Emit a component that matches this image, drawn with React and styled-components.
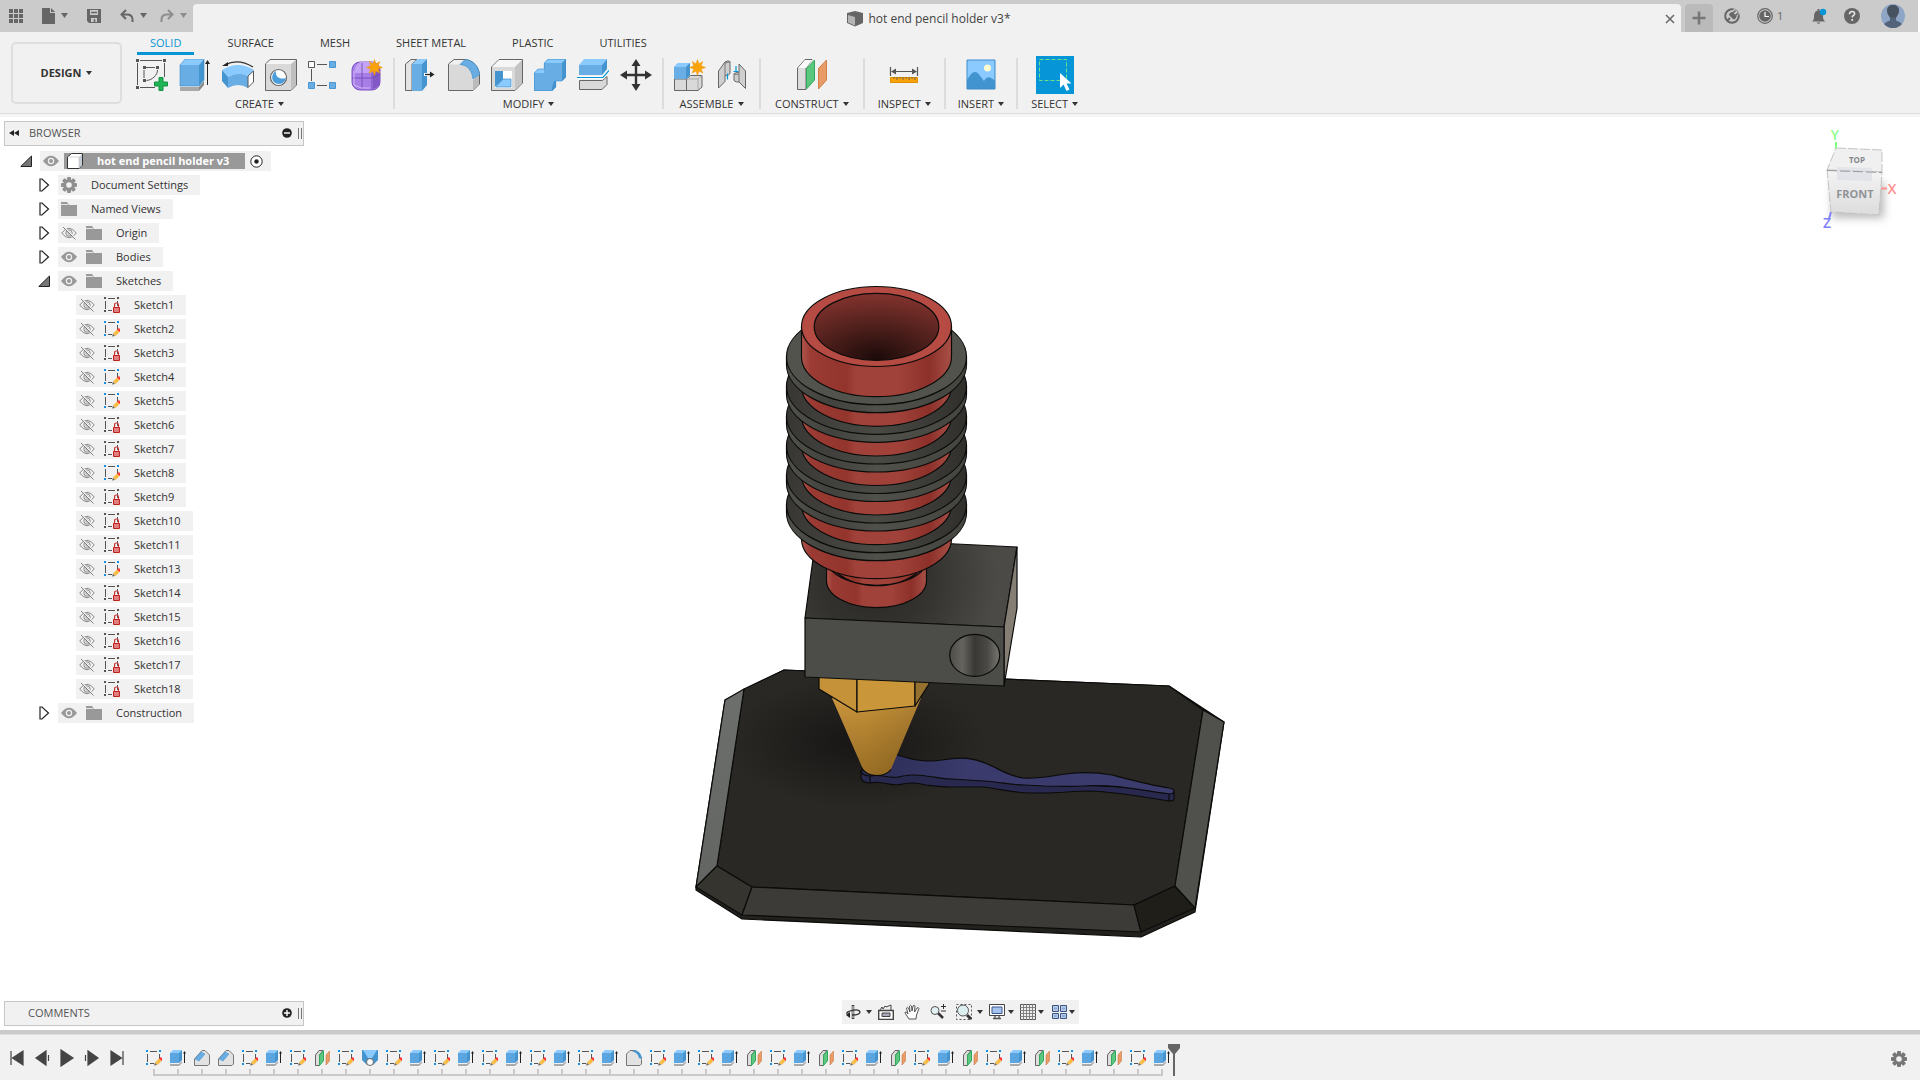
import React, { useState } from "react";
import styled, { createGlobalStyle } from "styled-components";

const GlobalStyle = createGlobalStyle`
  * {
    box-sizing: border-box;
  }

  body {
    margin: 0;
    background: #fff;
    color: #333;
    font-family: "Open Sans", "Noto Sans", sans-serif;
    font-size: 11px;
    line-height: 16px;
  }

  button {
    display: inline-flex;
    align-items: center;
    justify-content: center;
    flex-shrink: 0;
    padding: 0;
    border: 0;
    background: none;
    color: inherit;
    font: inherit;
    white-space: nowrap;
    cursor: pointer;
  }

  ul,
  ol {
    margin: 0;
    padding: 0;
    list-style: none;
  }

  svg {
    display: block;
    flex-shrink: 0;
  }
`;

const Page = styled.div`
  display: flex;
  flex-direction: column;
  height: 100vh;
  overflow: hidden;
`;

/* ---------- top bar ---------- */

const TopBar = styled.header`
  display: flex;
  align-items: flex-end;
  height: 32px;
  margin-right: 2px;
  background: #cbcbcb;
  color: #666;
`;

const QuickTools = styled.div`
  display: flex;
  align-items: center;
  width: 193px;
  height: 32px;
  padding-left: 9px;
`;

const QuickButton = styled.button`
  gap: 6px;
  margin-right: ${(p) => p.$space}px;
  opacity: ${(p) => (p.disabled ? 0.6 : 1)};
`;

const DocumentTab = styled.div`
  display: flex;
  flex: 1;
  align-items: center;
  height: 28px;
  padding: 1px 6px 0 0;
  border-radius: 4px 4px 0 0;
  background: #f1f1f1;
`;

const DocumentTitle = styled.h1`
  display: flex;
  flex: 1;
  align-items: center;
  justify-content: center;
  gap: 5px;
  margin: 0;
  color: #444;
  font-size: 12px;
  font-weight: 400;
`;

const NewTabButton = styled.button`
  width: 28px;
  height: 28px;
  margin-left: 4px;
  border-radius: 4px 4px 0 0;
  background: #bababa;
`;

const Account = styled.div`
  display: flex;
  align-items: center;
  width: 205px;
  height: 32px;
  padding-left: 11px;
`;

const AccountButton = styled.button`
  gap: 4px;
  margin-right: ${(p) => p.$space || 0}px;
`;

/* ---------- ribbon ---------- */

const Ribbon = styled.div`
  display: flex;
  height: 82px;
  border-bottom: 1px solid #dcdcdc;
  background: #f1f1f1;
`;

const RibbonShadow = styled.div`
  height: 3px;
  background: #f5f5f5;
`;

const DesignButton = styled.button`
  gap: 5px;
  width: 111px;
  height: 62px;
  margin: 10px 4px 0 11px;
  border: 2px solid #dedede;
  border-radius: 5px;
  font-weight: 700;
`;

const RibbonTabs = styled.div`
  display: flex;
  gap: 20px;
  height: 23px;
  padding-left: 11px;
`;

const RibbonTab = styled.button`
  padding: 2px 13px 0;
  border-bottom: 3px solid ${(p) => (p.$active ? "#0696d7" : "transparent")};
  color: ${(p) => (p.$active ? "#0696d7" : "#333")};
`;

const ToolGroups = styled.div`
  display: flex;
  padding-top: 1px;
`;

const ToolGroup = styled.div`
  display: flex;
  flex-direction: column;
  align-items: center;
  gap: 2px;
  height: 56px;
  padding: 0 ${(p) => p.$pad}px;
`;

const Separator = styled.div`
  width: 2px;
  height: 51px;
  margin-top: 2px;
  background: #dcdcdc;
`;

const ToolRow = styled.div`
  display: flex;
  align-items: center;
  gap: 11px;
  height: 38px;
`;

const ToolButton = styled.button`
  width: ${(p) => (p.$active ? 38 : 32)}px;
  height: ${(p) => (p.$active ? 38 : 32)}px;
  background: ${(p) => (p.$active ? "#0696d7" : "none")};
`;

const GroupLabel = styled.button`
  gap: 4px;
  height: 16px;
`;

/* ---------- workspace ---------- */

const Workspace = styled.main`
  position: relative;
  display: flex;
  flex: 1;
  flex-direction: column;
  justify-content: space-between;
  min-height: 0;
`;

const ModelCanvas = styled.svg`
  position: absolute;
  inset: 0;
  width: 100%;
  height: 100%;
`;

const CubeCanvas = styled.svg`
  position: absolute;
  top: 8px;
  right: 15px;
`;

const SidePanel = styled.aside`
  position: relative;
  width: 300px;
  margin: 4px 0 4px 4px;
`;

const PanelHeader = styled.div`
  display: flex;
  align-items: center;
  height: 25px;
  padding: 0 1px 1px 4px;
  border: 1px solid #c6c6c6;
  background: #f1f1f1;
  color: #555;
`;

const PanelTitle = styled.h2`
  flex: 1;
  margin: 0 0 0 ${(p) => (p.$indent ? 19 : 9)}px;
  font-size: 11px;
  font-weight: 400;
`;

const PanelGrip = styled.div`
  width: 4px;
  height: 11px;
  margin-left: 6px;
  border: 1px solid #777;
  border-width: 0 1px;
`;

const Tree = styled.ul`
  display: flex;
  flex-direction: column;
  gap: 4px;
  padding-top: 5px;
`;

const TreeRow = styled.li`
  display: flex;
  align-items: center;
  height: 20px;
  padding-left: ${(p) => p.$indent}px;
`;

const Twisty = styled.button`
  width: 14px;
  margin-right: 7px;
`;

const TreeItem = styled.div`
  display: flex;
  align-items: center;
  gap: ${(p) => (p.$root ? 5 : 9)}px;
  height: 20px;
  padding: 0 ${(p) => (p.$root ? 8 : 12)}px 0 3px;
  background: #f1f1f1;
  white-space: nowrap;
`;

const TreeName = styled.span`
  display: flex;
  align-items: center;
  gap: 14px;
`;

const RootName = styled.strong`
  display: flex;
  align-items: center;
  gap: 14px;
  height: 16px;
  padding: 0 16px 0 3px;
  background: #999;
  color: #fff;
`;

const BottomRow = styled.div`
  position: relative;
  display: grid;
  grid-template-columns: 304px 1fr 304px;
  align-items: end;
`;

const NavBar = styled.nav`
  display: flex;
  align-items: center;
  justify-self: center;
  height: 24px;
  margin-bottom: 6px;
  padding: 0 4px 0 3px;
  background: #f1f1f1;
`;

const NavButton = styled.button`
  gap: ${(p) => p.$gap || 0}px;
  margin-left: ${(p) => p.$space || 0}px;
`;

/* ---------- timeline ---------- */

const Timeline = styled.footer`
  display: flex;
  align-items: flex-start;
  height: 50px;
  border-top: 4px solid #cacaca;
  padding-left: 4px;
  background: #f1f1f1;
  box-shadow: inset 0 1px #dedede;
`;

const PlayControls = styled.div`
  display: flex;
  margin: 15px 13px 0 0;
`;

const PlayButton = styled.button`
  width: 25px;
  height: 18px;
`;

const Track = styled.div`
  padding-top: 16px;
`;

const Features = styled.ol`
  display: flex;
`;

const Feature = styled.li`
  display: flex;
  flex-direction: column;
  align-items: center;
  gap: 3px;
  width: 24px;
`;

const Tick = styled.span`
  width: 2px;
  height: 5px;
  background: #c9c9c9;
`;

const Baseline = styled.div`
  height: 2px;
  margin: 0 11px;
  background: #c9c9c9;
`;

const Marker = styled.svg`
  margin: 10px auto 0 -6px;
`;

const SettingsButton = styled.button`
  margin: 17px 13px 0 0;
`;

/* ---------- icons ---------- */

const Icon = ({ size = 16, w, h, children, ...rest }) => (
  <svg
    width={w || size}
    height={h || size}
    viewBox={`0 0 ${w || size} ${h || size}`}
    fill="none"
    aria-hidden="true"
    {...rest}
  >
    {children}
  </svg>
);

const Caret = ({ size = 6, color = "currentColor" }) => (
  <Icon w={size} h={size === 6 ? 5 : 6}>
    <path d={size === 6 ? "M0 0h6L3 4z" : "M0 0h7L3.500 5z"} fill={color} />
  </Icon>
);

const Gear = ({ color = "#8f8f8f" }) => (
  <Icon>
    <g fill={color}>
      {[0, 45, 90, 135].map((a) => (
        <rect key={a} x="6" y="0" width="4" height="16" rx="1" transform={`rotate(${a} 8 8)`} />
      ))}
      <circle cx="8" cy="8" r="5.800" />
    </g>
    <circle cx="8" cy="8" r="2.800" fill="#f1f1f1" />
  </Icon>
);

const Star = ({ x, y }) => (
  <path
    transform={`translate(${x} ${y})`}
    fill="#f9a30a"
    stroke="#ee9500"
    strokeWidth=".5"
    d="M0-8 1.400-3.600 5.300-6 3.600-1.800 8 0 3.600 1.600 5.400 5.500 1.400 3.600 0 8-1.400 3.600-5.400 5.500-3.600 1.600-8 0-3.600-1.800-5.300-6-1.400-3.600z"
  />
);

const BLUE = "#68aee5";
const BLUE_TOP = "#8acaff";
const BLUE_SIDE = "#4494d0";
const GRAY = "#d9d9d9";
const LINE = "#666";

const toolIcons = {
  sketch: (
    <>
      <path d="M4 1.500h22M1.500 4v22M4 28.500h15M28.500 4v14" stroke="#555" />
      <path d="M10 8.500h9M8 11v8M21.500 11c0 5-5 10-11 10.500" stroke="#555" />
      <path d="M0 0h3v3H0zM27 0h3v3h-3zM0 27h3v3H0zM7 7h3v3H7zM20 7h3v3h-3zM7 20h3v3H7z" fill="#555" />
      <path d="M23 18.500h4v4.500h4.500v4H27v4.500h-4V27h-4.500v-4H23z" fill="#1fb455" stroke="#12923f" />
    </>
  ),
  extrude: (
    <>
      <path d="M1 28h19v4H1z" fill="#a9a9a9" />
      <path d="M20 28l5-6v4l-5 6z" fill="#888" />
      <path d="M1 6l5-6h19l-5 6z" fill={BLUE_TOP} />
      <path d="M20 6l5-6v21l-5 6z" fill={BLUE_SIDE} />
      <path d="M1 6h19v21H1z" fill={BLUE} />
      <path d="M1 27V6l5-6h19v21l-5 6z" stroke="#3d8cc8" strokeWidth=".6" />
      <path d="M28.500 26V4" stroke="#222" />
      <path d="M26 5l2.500-4L31 5z" fill="#222" />
    </>
  ),
  revolve: (
    <>
      <path d="M0 11Q16 1 32 11L26 17Q16 12 6 18z" fill={BLUE_TOP} />
      <path d="M0 11l6 7v11l-6-7z" fill={BLUE_SIDE} />
      <path d="M6 18q10-6 20-1v12q-10-6-20 0z" fill={BLUE} />
      <path d="M26 17l5.500-5v11L26 28.500z" fill="#fff" stroke="#555" />
      <path d="M3 6Q16-1 31 8" stroke="#333" strokeWidth="1.200" />
      <path d="M0 7l6-4v4z" fill="#222" />
    </>
  ),
  hole: (
    <>
      <path d="M.5 31.500V5L5 .5h26.500V26L26 31.500z" fill={GRAY} stroke={LINE} />
      <path d="M1 5l5-4h25l-5 4z" fill="#f5f5f5" />
      <path d="M26 5l5-4v25l-5 5z" fill="#c0c0c0" />
      <circle cx="13.500" cy="18.500" r="8" fill="#fff" stroke={LINE} strokeWidth="1.200" />
      <path d="M11 12c-6 3-5 13 3 13 4 0 6-3 7-6-6 2-11-1-10-7z" fill="#4b9ddb" />
    </>
  ),
  pattern: (
    <>
      <path d="M9 5.500h10M3.500 10v12M9 26.500h10" stroke="#555" />
      <path d="M.5 2.500h6v6h-6z" fill="#fff" stroke="#555" />
      <path d="M21.500 2.500h6v6h-6zM.5 23.500h6v6h-6zM21.500 23.500h6v6h-6z" fill={BLUE} stroke="#4b97d1" />
    </>
  ),
  form: (
    <>
      <rect x="1" y="3" width="28" height="28" rx="8" fill="#a77ee6" stroke="#7d52c4" />
      <path d="M9 3h13q7 1 7 9l-6 2H4q-2-6 5-11z" fill="#c4a2f5" />
      <path d="M22 10l7-2v14q0 6-7 8z" fill="#8158c6" />
      <path d="M11 4v26M1 19h20l8-4M21 10v20" stroke="#7046b5" strokeWidth=".8" />
      <path d="M3 12v14l7 3h9" stroke="#ddc8ff" strokeWidth=".8" />
      <Star x={23.5} y={8.5} />
    </>
  ),
  pressPull: (
    <>
      <path d="M.5 31.500V5L6 .5h6L7 5v26.500z" fill="#e4e4e4" stroke={LINE} />
      <path d="M7 5l6-5h9l-5 5z" fill={BLUE_TOP} />
      <path d="M17 5l5-5v26l-5 6z" fill={BLUE_SIDE} />
      <path d="M7 5h10v27H7z" fill={BLUE} />
      <path d="M19 14h5v3h-5z" fill="#fff" />
      <path d="M20 15.500h7" stroke="#222" strokeWidth="1.300" />
      <path d="M25 12.500l4.500 3-4.500 3z" fill="#222" />
    </>
  ),
  fillet: (
    <>
      <path d="M.5 31.500V5L6 .5h11C25 1 31 8 31.500 16v9L25 31.500z" fill="#f0f0f0" stroke={LINE} />
      <path d="M1 31V5.500H12C20 6 24 12 25 21v10z" fill={GRAY} />
      <path d="M25 31V21l6-5v9z" fill="#bbb" />
      <path d="M12 5.500L17 .5C25 1 31 8 31.500 15.500L25 20C24 12 20 6 12 5.500z" fill={BLUE} stroke="#3d8cc8" strokeWidth=".7" />
    </>
  ),
  shell: (
    <>
      <path d="M.5 31.500V8L8 .5h23.500V24L24 31.500z" fill={GRAY} stroke={LINE} />
      <path d="M1 8l7-7h23l-7 7z" fill="#f6f6f6" />
      <path d="M24 8l7-7v23l-7 7z" fill="#c4c4c4" />
      <path d="M4 12h17v17H4z" fill="#fff" />
      <path d="M4 12h8v9l-8 7z" fill={BLUE_SIDE} />
      <path d="M12 20h8v8H5z" fill={BLUE_TOP} stroke="#3d8cc8" strokeWidth=".7" />
    </>
  ),
  combine: (
    <>
      <path d="M0 32V14l4-4h6V4l4-4h18v18l-4 4h-6v6l-4 4z" fill={BLUE} />
      <path d="M10 4l4-4h18l-4 4zM0 14l4-4h6v4z" fill={BLUE_TOP} />
      <path d="M28 4l4-4v18l-4 4zM18 28v4l4-4v-6h-2z" fill={BLUE_SIDE} />
      <path d="M.3 31.700V14l4-4h6V4l4-3.700h17.400V18l-4 4h-6v6l-4 3.700z" stroke="#3d8cc8" strokeWidth=".6" />
    </>
  ),
  split: (
    <>
      <path d="M2.500 30.500V21.500h23l4.500-4v8l-5 5z" fill={GRAY} stroke={LINE} />
      <path d="M2 6l5-6h23l-5 6z" fill={BLUE_TOP} />
      <path d="M25 6l5-6v10l-5 6z" fill={BLUE_SIDE} />
      <path d="M2 6h23v10H2z" fill={BLUE} />
      <path d="M0 18.500h26l6-7" stroke="#fff" strokeWidth="3" />
      <path d="M0 18.500h26l6-7" stroke="#0696d7" strokeWidth="1.200" />
    </>
  ),
  move: (
    <path
      d="M16 0l4.500 7H17.200v7.800H25V11.500l7 4.500-7 4.500v-3.300H17.200V25h3.300L16 32l-4.500-7h3.300v-7.800H7v3.300L0 16l7-4.500v3.300h7.800V7H11.500z"
      fill="#333"
    />
  ),
  component: (
    <>
      <path d="M.5 31.500V20h12v11.500zM12.500 31.500V20l4-3.500H28V28l-4 3.500z" fill={GRAY} stroke={LINE} />
      <path d="M12.500 20H24l4-3.500M24 20v11.500" stroke="#999" strokeWidth=".7" />
      <path d="M0 8l4-4h12v12l-4 4H0z" fill={BLUE} />
      <path d="M0 8l4-4h12l-4 4z" fill={BLUE_TOP} />
      <path d="M12 8l4-4v12l-4 4z" fill={BLUE_SIDE} />
      <Star x={23.5} y={8.5} />
    </>
  ),
  joint: (
    <>
      <path d="M1.500 29V12L8 3q3-2 5-.5v12q-1 2-5 2v6z" fill="#cfcfcf" stroke={LINE} />
      <path d="M8 3.500v13M8 4q4-1 5-1" stroke="#777" />
      <path d="M28.500 29.500V12L22 5v8l-5 1.500v7q2 2 5 1.500z" fill="#cfcfcf" stroke={LINE} />
      <path d="M22 13v10M17 15q3 1 5 0" stroke="#777" />
      <path d="M10.500 14.500v6M19 7v6M16.500 12.500h5" stroke="#0696d7" strokeWidth="1.200" />
    </>
  ),
  construct: (
    <>
      <path d="M1.500 30.500V9L9 .5h7L10 9v21.500z" fill="#dcdcdc" stroke={LINE} />
      <path d="M2 9l7-8h7l-6 8z" fill="#fafafa" />
      <path d="M10.500 30V9.500L18.500 1v20z" fill="#59c77e" stroke="#36a75e" />
      <path d="M22.500 30V9.500L30.500 1v20z" fill="#e89b66" stroke="#cf7f47" />
    </>
  ),
  measure: (
    <>
      <path d="M2.500 8v9M29.500 8v9M6 12.500h20" stroke="#555" strokeWidth="1.200" />
      <path d="M3 12.500l5-3v6zM29 12.500l-5-3v6z" fill="#555" />
      <path d="M2.500 18.500h27v5h-27z" fill="#f9a30a" stroke="#e48f00" />
      <path d="M6 18v2M9 18v3M12 18v2M15 18v3M18 18v2M21 18v3M24 18v2M27 18v3" stroke="#555" strokeWidth=".8" />
    </>
  ),
  image: (
    <>
      <path d="M2 1h28v29H2z" fill={BLUE_TOP} />
      <path d="M2 21c3-5 5-8 8-8s6 5 9 9c3-5 6-5 11 0v8H2z" fill="#4194d0" />
      <circle cx="22.500" cy="9" r="3.500" fill="#fffbd0" />
      <path d="M2 1h28v29H2z" stroke="#3d8cc8" />
    </>
  ),
  select: (
    <>
      <path d="M.5.5h27v21H.5z" stroke="#6fe08a" strokeDasharray="4 2" />
      <path d="M21 14v15l3.500-3.500 3 6.500 3-1.500-3-6h5z" fill="#fff" />
    </>
  ),
};

const ToolIcon = ({ name }) => <Icon size={32}>{toolIcons[name]}</Icon>;

const SketchIcon = ({ locked }) => (
  <Icon>
    <path d="M4 1.500h7M1.500 4v8M4 13.500h4M13.500 4v5" stroke="#555" />
    <path d="M0 0h2v2H0zM13 0h2v2h-2zM0 13h2v2H0z" fill={locked ? "#555" : "#1a8fe8"} />
    {locked ? (
      <>
        <path d="M10.500 10V8q0-2 2-2t2 2v2" stroke="#cf3a3a" strokeWidth="1.200" />
        <path d="M9.500 10.500h6v5h-6z" fill="#de8080" stroke="#c42020" />
      </>
    ) : (
      <>
        <path d="M8 15.500l1-3 2 2.500z" fill="#666" />
        <path d="M9 12.500l4-4 2.500 2.500-4 4z" fill="#f9bc45" />
        <path d="M13 8.500l1-1q1-.5 2 .5t.5 2l-1 1z" fill="#f33" />
      </>
    )}
  </Icon>
);

const PlaneIcon = () => (
  <Icon>
    <path d="M1.500 15.500V5L5 .5h4L5.500 5v10.500z" fill="#ddd" stroke="#666" />
    <path d="M5.500 15.500V5L9.500.8v10z" fill="#59c77e" stroke="#36a75e" />
    <path d="M12 15V5L15.500 1v10z" fill="#e89b66" stroke="#cf7f47" strokeWidth=".6" />
  </Icon>
);

const featureIcons = {
  S: ["Sketch", <SketchIcon key="s" />],
  P: ["Construction plane", <PlaneIcon key="p" />],
  E: [
    "Extrude",
    <Icon key="e">
      <path d="M0 14h9l3-3v2l-3 3H0z" fill="#a9a9a9" />
      <path d="M0 3l3-3h9L9 3z" fill={BLUE_TOP} />
      <path d="M9 3l3-3v10l-3 3z" fill={BLUE_SIDE} />
      <path d="M0 3h9v10H0z" fill="#5ba6e0" />
      <path d="M14.500 13V3" stroke="#222" />
      <path d="M13 3.500L14.500 1 16 3.500z" fill="#222" />
    </Icon>,
  ],
  C: [
    "Chamfer",
    <Icon key="c">
      <path d="M.5 15.500V9L8 .5h3L15.500 5v9L14 15.500z" fill="#e2e2e2" stroke="#777" />
      <path d="M1 9l6-7 4 2-6 7z" fill={BLUE} stroke="#3d8cc8" strokeWidth=".5" />
    </Icon>,
  ],
  F: [
    "Fillet",
    <Icon key="f">
      <path d="M.5 15.500V4L4 .5h4c4 1 7 5 7.500 9V14L14 15.500z" fill="#e2e2e2" stroke="#777" />
      <path d="M6 1.500L9 0c4 1 6.500 4 7 9l-3-1c-1-4-3-6-7-6.500z" fill={BLUE_SIDE} />
    </Icon>,
  ],
  L: [
    "Loft",
    <Icon key="l">
      <path d="M0 0h16v10l-5 5H5l-5-5z" fill={BLUE_SIDE} />
      <path d="M1 0h14l-5 8H6z" fill={BLUE_TOP} />
      <circle cx="8" cy="12" r="3.500" fill="#fff" stroke="#666" />
    </Icon>,
  ],
};

const FolderIcon = () => (
  <Icon>
    <path d="M0 1h6l2 3h8v11H0z" fill="#999" />
    <path d="M0 3.500h7" stroke="#e4e4e4" />
  </Icon>
);

const EyeIcon = ({ off }) => (
  <Icon>
    {off ? (
      <>
        <path d="M.7 8Q8-1.500 15.300 8 8 17.500.7 8z" stroke="#888" />
        <circle cx="8" cy="8" r="3.200" stroke="#888" />
        <circle cx="8" cy="8" r="1.200" stroke="#888" strokeWidth=".8" />
        <path d="M3 2l12 12" stroke="#f1f1f1" strokeWidth="1.200" />
        <path d="M2 2l12.500 12.500" stroke="#777" strokeWidth=".9" />
      </>
    ) : (
      <>
        <path d="M0 8Q8-2.500 16 8 8 18.500 0 8z" fill="#999" />
        <circle cx="8" cy="8" r="2.600" stroke="#f1f1f1" strokeWidth="1.200" />
      </>
    )}
  </Icon>
);

const BodyIcon = () => (
  <Icon>
    <path d="M.5 15.500V4L4.500.5h11V12L12 15.500z" fill="#fff" stroke="#333" />
    <path d="M12 4l3-3v11l-3 3z" fill="#c4ccd6" />
    <path d="M1 4h11v11" stroke="#c9c9c9" strokeWidth=".7" />
  </Icon>
);

const GridIcon = () => (
  <Icon size={14}>
    {[0, 5, 10].map((y) => (
      <path key={y} d={`M0 ${y}h4v4H0zM5 ${y}h4v4H5zM10 ${y}h4v4h-4z`} fill="currentColor" />
    ))}
  </Icon>
);

const CircleSign = ({ plus }) => (
  <Icon size={10}>
    <circle cx="5" cy="5" r="4.800" fill="#222" />
    <path d={plus ? "M2 5h6M5 2v6" : "M2 5h6"} stroke="#fff" strokeWidth="1.400" />
  </Icon>
);

/* ---------- data ---------- */

const ribbonTabs = ["SOLID", "SURFACE", "MESH", "SHEET METAL", "PLASTIC", "UTILITIES"];

const toolGroups = [
  { label: "CREATE", pad: 10, tools: ["sketch", "extrude", "revolve", "hole", "pattern", "form"] },
  { label: "MODIFY", pad: 10, tools: ["pressPull", "fillet", "shell", "combine", "split", "move"] },
  { label: "ASSEMBLE", pad: 10, tools: ["component", "joint"] },
  { label: "CONSTRUCT", pad: 14, tools: ["construct"] },
  { label: "INSPECT", pad: 13, tools: ["measure"] },
  { label: "INSERT", pad: 12, tools: ["image"] },
  { label: "SELECT", pad: 13, tools: ["select"] },
];

const editable = [2, 4, 5, 8, 13];
const sketchNumbers = [1, 2, 3, 4, 5, 6, 7, 8, 9, 10, 11, 13, 14, 15, 16, 17, 18];

const treeRows = [
  { name: "Document Settings", level: 1, icon: <Gear /> },
  { name: "Named Views", level: 1, icon: <FolderIcon /> },
  { name: "Origin", level: 1, eye: "off", icon: <FolderIcon /> },
  { name: "Bodies", level: 1, eye: "on", icon: <FolderIcon /> },
  { name: "Sketches", level: 1, eye: "on", open: true, icon: <FolderIcon /> },
  ...sketchNumbers.map((n) => ({
    name: `Sketch${n}`,
    level: 2,
    eye: "off",
    icon: <SketchIcon locked={!editable.includes(n)} />,
  })),
  { name: "Construction", level: 1, eye: "on", icon: <FolderIcon /> },
];

const features = "SECCSESPSLSESESESESEFSESEPSEPSEPSEPSEPSEPSE".split("");

const playButtons = [
  ["Go to start", "M3 2v14M15 2v14L4.500 9z"],
  ["Step back", "M15.500 6v6M13 2v14L3 9z"],
  ["Play", "M3 1v16L15 9z"],
  ["Step forward", "M2.500 6v6M5 2v14L15 9z"],
  ["Go to end", "M15 2v14M3 2v14L13.500 9z"],
];

/* ---------- drawings ---------- */

const CX = 876.5;
const finLevels = [356.7, 386.3, 416, 445.5, 475, 504.7];

const Fin = ({ y, first }) => (
  <>
    <path
      d={`M${CX - 90} ${y}v8a90 48 0 0 0 180 0v-8z`}
      fill="url(#finSide)"
    />
    <ellipse cx={CX} cy={y} rx="90" ry="48" fill={first ? "#53534d" : "url(#finTop)"} />
  </>
);

const Barrel = ({ top, bottom, rx = 75, ry = 40 }) => (
  <path
    d={`M${CX - rx} ${top}V${bottom}a${rx} ${ry} 0 0 0 ${rx * 2} 0V${top}`}
    fill="url(#red)"
  />
);

const Model = () => (
  <ModelCanvas viewBox="480 117 960 913" role="img" aria-label="Hot end pencil holder model">
    <defs>
      <linearGradient id="red">
        <stop offset="0" stopColor="#b0564d" />
        <stop offset=".06" stopColor="#9b3b33" />
        <stop offset=".3" stopColor="#93352d" />
        <stop offset=".36" stopColor="#a0423a" />
        <stop offset=".65" stopColor="#a0423a" />
        <stop offset=".85" stopColor="#8c3029" />
        <stop offset="1" stopColor="#a85047" />
      </linearGradient>
      <linearGradient id="finTop">
        <stop offset="0" stopColor="#383734" />
        <stop offset=".5" stopColor="#4a4a45" />
        <stop offset="1" stopColor="#302f2c" />
      </linearGradient>
      <linearGradient id="finSide">
        <stop offset="0" stopColor="#50514b" />
        <stop offset=".25" stopColor="#42433e" />
        <stop offset=".5" stopColor="#50514b" />
        <stop offset="1" stopColor="#454540" />
      </linearGradient>
      <radialGradient id="bore" cy=".95" r=".95">
        <stop offset="0" stopColor="#1d0b0a" />
        <stop offset=".5" stopColor="#50201c" />
        <stop offset="1" stopColor="#84332e" />
      </radialGradient>
      <radialGradient id="blockTop" gradientUnits="userSpaceOnUse" cx="872" cy="578" r="125">
        <stop offset="0" stopColor="#292826" />
        <stop offset=".45" stopColor="#33322f" />
        <stop offset="1" stopColor="#4b4a46" />
      </radialGradient>
      <linearGradient id="screwHole">
        <stop offset="0" stopColor="#4d4c48" />
        <stop offset=".25" stopColor="#65645f" />
        <stop offset=".5" stopColor="#393835" />
        <stop offset=".75" stopColor="#4a4946" />
        <stop offset="1" stopColor="#77766f" />
      </linearGradient>
      <radialGradient id="plate" gradientUnits="userSpaceOnUse" cx="858" cy="745" r="130" gradientTransform="translate(0 370) scale(1 .5)">
        <stop offset="0" stopColor="#171615" />
        <stop offset="1" stopColor="#292824" />
      </radialGradient>
      <linearGradient id="cone">
        <stop offset="0" stopColor="#c18e3d" />
        <stop offset=".4" stopColor="#b98731" />
        <stop offset=".65" stopColor="#a97b2c" />
        <stop offset="1" stopColor="#8f6a2c" />
      </linearGradient>
      <linearGradient id="coneShade" x2="0" y2="1">
        <stop offset="0" stopColor="#d69f40" stopOpacity=".5" />
        <stop offset="1" stopColor="#6a4a15" stopOpacity=".4" />
      </linearGradient>
      <linearGradient id="leftBevel" x2="0" y2="1">
        <stop offset="0" stopColor="#6c6f6b" />
        <stop offset="1" stopColor="#626562" />
      </linearGradient>
      <linearGradient id="ink">
        <stop offset="0" stopColor="#2c2c55" />
        <stop offset=".35" stopColor="#3a3a6c" />
        <stop offset="1" stopColor="#3b3b6e" />
      </linearGradient>
    </defs>

    <g stroke="#0b0b0a" strokeWidth="1.200" strokeLinejoin="round">
      {/* base plate with its bevelled edge */}
      <path d="M784 670l385 16 55 36-29 190-54 25-399-18-46-29v-3l29-187z" fill="#22211e" />
      <path d="M784 670l385 16 34 24-28 176-41 19-382-18-35-21 27-177z" fill="url(#plate)" />
      <path d="M725 700l19-11-27 177-21 21z" fill="url(#leftBevel)" />
      <path d="M717 866l35 21-10 28-46-28z" fill="#36342e" />
      <path d="M752 887l382 18 7 27-399-17z" fill="#3c3b37" />
      <path d="M1134 905l41-19 20 22-54 24z" fill="#1f1e19" />
      <path d="M1203 710l21 12-29 186-20-22z" fill="#50504d" />

      {/* extruded line */}
      <path
        d="M861 771v7c1 3 4 5 9 5 5-1 9-1 13 0 6 1 9 2 14 2 5-1 9-2 15-2s10 1 14 2c9 1 17 2 25 2h33c16 2 30 6 46 6h14c16 0 30-2 47-2 26 1 52 6 78 10 4 0 5-1 5-2v-7l-6-2z"
        fill="#292950"
      />
      <path
        d="M861 771c1 4 4 5 9 5 5-1 9-1 13 0 5 1 9 2 15 1 5-1 9-2 14-2s9 0 14 1c9 1 17 3 25 3l33 2c16 1 28 4 40 4l20 1c14 0 26 1 40 0 30-2 56 4 85 8 4 0 5-1 5-3-1-3-4-3-5-3-20-3-38-8-57-13-16-3-32-3-46-1-15 2-28 5-43 4-13-2-21-7-29-11-24-12-36-9-52-7-18 3-32-1-48-6l-11-2z"
        fill="url(#ink)"
      />
      <path d="M870 776v7M1169 794v8" />

      {/* nozzle */}
      <path d="M832 698l31 71c3 4 8 6 14 6s11-2 14-6l30-71z" fill="url(#cone)" stroke="none" />
      <path d="M832 698l31 71c3 4 8 6 14 6s11-2 14-6l30-71z" fill="url(#coneShade)" stroke="none" />
      <path d="M861 767c3 6 9 8.500 16 8.500s11-2 14-6" fill="none" />
      <path d="M819 676v13l38 23V676z" fill="#c5923a" />
      <path d="M857 676v36l58-6v-30z" fill="#c99639" />
      <path d="M915 676v30l14-22v-8z" fill="#95702f" />

      {/* heater block */}
      <path d="M805 618l11-81 201 10-13 80z" fill="url(#blockTop)" />
      <path d="M1004 627l13-80v61l-13 78z" fill="#857e75" />
      <path d="M805 618l199 9v59l-199-9z" fill="#4c4d48" />
      <ellipse cx="974.700" cy="655.300" rx="25" ry="21" fill="url(#screwHole)" />

      {/* heat sink, drawn from the bottom up */}
      <Barrel top={560} bottom={580.7} rx={50} ry={27} />
      <path d="M832 571c20 19 70 19 90 0M837 573c22 17 58 17 80 0" fill="none" />
      <Barrel top={520} bottom={538.7} />
      {[...finLevels].reverse().map((y, i, all) => (
        <React.Fragment key={y}>
          <Fin y={y} first={i === all.length - 1} />
          <Barrel top={y - 29.6} bottom={y} />
        </React.Fragment>
      ))}
      <ellipse cx={CX} cy="326.500" rx="75" ry="40" fill="#b54b42" />
      <ellipse cx={CX} cy="326.800" rx="62.300" ry="33.500" fill="url(#bore)" />
    </g>
  </ModelCanvas>
);

const ViewCube = () => (
  <CubeCanvas width="90" height="110" viewBox="1815 125 90 110" role="img" aria-label="View cube">
    <defs>
      <linearGradient id="cubeFront" x2="0" y2="1">
        <stop offset="0" stopColor="#f4f4f4" />
        <stop offset="1" stopColor="#dcdcdc" />
      </linearGradient>
      <filter id="cubeShadow" x="-30%" y="-30%" width="160%" height="160%">
        <feGaussianBlur stdDeviation="4" />
      </filter>
    </defs>
    <path d="M1832 182h52v36h-52z" fill="#bbb" filter="url(#cubeShadow)" />
    <path d="M1836 142v7" stroke="#7dff7d" strokeWidth="2" />
    <path d="M1881 188.500h6" stroke="#ff8f8f" strokeWidth="2" />
    <path d="M1831 212l-2 7" stroke="#8080ff" strokeWidth="2" />
    <path d="M1836 148l46 2v22l-55-2z" fill="#f0f0f0" stroke="#c4c4c4" strokeDasharray="10 2" />
    <path d="M1827 170l55 2-3 43-48-3z" fill="url(#cubeFront)" stroke="#c4c4c4" strokeDasharray="10 2" />
    <path d="M1837 167l35 1v13l-35-1z" fill="#dcdee6" opacity=".7" />
    <path d="M1827 170.500l55 2" stroke="#999" strokeDasharray="10 3" />
    <g textAnchor="middle" fontFamily="Open Sans, sans-serif">
      <text x="1857" y="163" fontSize="8" fontWeight="700" fill="#85878b">TOP</text>
      <text x="1855" y="198" fontSize="11" fontWeight="700" fill="#909398">FRONT</text>
      <text x="1835" y="140" fontSize="14" fontWeight="600" fill="#8dff8d">Y</text>
      <text x="1892" y="194" fontSize="14" fontWeight="600" fill="#ff8f8f">X</text>
      <text x="1827" y="228" fontSize="14" fontWeight="600" fill="#8080ff">Z</text>
    </g>
  </CubeCanvas>
);

/* ---------- sections ---------- */

const Header = () => (
  <TopBar>
    <QuickTools>
      <QuickButton $space={19} aria-label="Show data panel">
        <GridIcon />
      </QuickButton>
      <QuickButton $space={19} aria-label="File">
        <Icon w={13} h={16}>
          <path d="M0 0h8v5h5v11H0z" fill="currentColor" />
          <path d="M9 0l4 4H9z" fill="currentColor" />
        </Icon>
        <Caret size={7} />
      </QuickButton>
      <QuickButton $space={19} aria-label="Save">
        <Icon size={14}>
          <path d="M0 0h14v14H2l-2-2z" fill="currentColor" />
          <path d="M3 1h8v5H3zM4 9h6v4H4z" fill="#cbcbcb" />
          <path d="M4 3.500h6M7.500 10v3" stroke="currentColor" strokeWidth="1.500" />
        </Icon>
      </QuickButton>
      <QuickButton $space={13} aria-label="Undo">
        <Icon size={14}>
          <path d="M12.500 13V10Q12 5.500 7 5.500H2" stroke="currentColor" strokeWidth="2" />
          <path d="M6 1L1.500 5.500 6 10" stroke="currentColor" strokeWidth="2" />
        </Icon>
        <Caret size={7} />
      </QuickButton>
      <QuickButton $space={0} disabled aria-label="Redo">
        <Icon size={14}>
          <path d="M1.500 13V10Q2 5.500 7 5.500H12" stroke="currentColor" strokeWidth="2" />
          <path d="M8 1l4.500 4.500L8 10" stroke="currentColor" strokeWidth="2" />
        </Icon>
        <Caret size={7} />
      </QuickButton>
    </QuickTools>
    <DocumentTab>
      <DocumentTitle>
        <Icon>
          <path d="M0 2l8-2 8 2v10l-8 3.500L0 12z" fill="#666" />
          <path d="M1 4l7 2v8.500L1 11.500z" fill="#b5b5b5" />
        </Icon>
        hot end pencil holder v3*
      </DocumentTitle>
      <AccountButton aria-label="Close document">
        <Icon size={10}>
          <path d="M1 1l8 8M9 1L1 9" stroke="#666" strokeWidth="1.500" />
        </Icon>
      </AccountButton>
    </DocumentTab>
    <NewTabButton aria-label="New design">
      <Icon size={14}>
        <path d="M7 .5v13M.5 7h13" stroke="#777" strokeWidth="2.600" />
      </Icon>
    </NewTabButton>
    <Account>
      <AccountButton $space={17} aria-label="Extensions">
        <Icon>
          <circle cx="8" cy="8" r="6.800" stroke="currentColor" strokeWidth="2" />
          <path d="M7.500 8.500l5.500-5.500" stroke="#cbcbcb" strokeWidth="7" />
          <path d="M3 13l3-3" stroke="currentColor" strokeWidth="1.800" />
          <path d="M5 7l4.500 4.500q3-1 3-3.500L8.500 4Q5.500 4 5 7z" fill="currentColor" />
          <path d="M9 5l2.500-2.500M11.500 7.500L14 5" stroke="currentColor" strokeWidth="1.600" />
        </Icon>
      </AccountButton>
      <AccountButton $space={28} aria-label="Job status, 1">
        <Icon>
          <circle cx="8" cy="8" r="7.300" stroke="currentColor" strokeWidth="1.200" />
          <circle cx="8" cy="8" r="5.800" fill="currentColor" />
          <path d="M8 4v4.500h4" stroke="#fff" strokeWidth="1.200" />
        </Icon>
        1
      </AccountButton>
      <AccountButton $space={17} aria-label="Notifications">
        <Icon>
          <path d="M1 13.500q2-1 2-5c0-4 2-6 4.500-6S12 4.500 12 8.500q0 4 2.500 5zM5.500 14.500h4q-2 2.500-4 0zM6.500 1h2v2h-2z" fill="currentColor" />
          <circle cx="12" cy="4" r="3.200" fill="#0696d7" />
        </Icon>
      </AccountButton>
      <AccountButton $space={21} aria-label="Help">
        <Icon>
          <circle cx="8" cy="8" r="8" fill="currentColor" />
          <path d="M5.500 6.200q0-2.700 2.600-2.700t2.500 2.300c0 1.700-2.400 1.700-2.400 3.700" stroke="#e6e6e6" strokeWidth="1.600" />
          <path d="M7.300 11h1.800v1.800H7.300z" fill="#e6e6e6" />
        </Icon>
      </AccountButton>
      <AccountButton aria-label="Profile">
        <Icon size={24}>
          <circle cx="12" cy="12" r="12" fill="#8fa5c6" />
          <path d="M3 20q2-2.500 6-3.500v-3Q6 10 6 6q1-5 6-5t6 5q0 4-3 7.500v3q4 1 6 3.500a12 12 0 0 1-18 0z" fill="#53637a" />
          <path d="M6 6q1-5 6-5t6 5q0 4-3 7.500H9Q6 10 6 6z" fill="#46525f" />
        </Icon>
      </AccountButton>
    </Account>
  </TopBar>
);

const Toolbar = () => {
  const [active, setActive] = useState("SOLID");

  return (
    <>
      <Ribbon>
        <DesignButton>
          DESIGN <Caret />
        </DesignButton>
        <div>
          <RibbonTabs role="tablist">
            {ribbonTabs.map((tab) => (
              <RibbonTab
                key={tab}
                role="tab"
                aria-selected={tab === active}
                $active={tab === active}
                onClick={() => setActive(tab)}
              >
                {tab}
              </RibbonTab>
            ))}
          </RibbonTabs>
          <ToolGroups>
            {toolGroups.map((group, i) => (
              <React.Fragment key={group.label}>
                {i > 0 && <Separator />}
                <ToolGroup $pad={group.pad}>
                  <ToolRow>
                    {group.tools.map((tool) => (
                      <ToolButton key={tool} $active={tool === "select"} aria-label={tool}>
                        <ToolIcon name={tool} />
                      </ToolButton>
                    ))}
                  </ToolRow>
                  <GroupLabel>
                    {group.label} <Caret />
                  </GroupLabel>
                </ToolGroup>
              </React.Fragment>
            ))}
          </ToolGroups>
        </div>
      </Ribbon>
      <RibbonShadow />
    </>
  );
};

const TwistyIcon = ({ open }) => (
  <Icon w={12} h={14}>
    {open ? (
      <path d="M11.500 2v10.500H.8z" fill="#777" stroke="#222" />
    ) : (
      <path d="M2 1h2l6.500 6L4 13H2z" fill="#fff" stroke="#222" strokeWidth="1.200" />
    )}
  </Icon>
);

const Browser = () => (
  <SidePanel>
    <PanelHeader>
      <button aria-label="Collapse browser">
        <Icon w={11} h={8}>
          <path d="M5 1v6L0 4zM10 1v6L5 4z" fill="#222" />
        </Icon>
      </button>
      <PanelTitle>BROWSER</PanelTitle>
      <button aria-label="Hide browser">
        <CircleSign />
      </button>
      <PanelGrip />
    </PanelHeader>
    <Tree>
      <TreeRow $indent={15}>
        <Twisty aria-label="Collapse">
          <TwistyIcon open />
        </Twisty>
        <TreeItem $root>
          <button aria-label="Toggle visibility">
            <EyeIcon />
          </button>
          <RootName>
            <BodyIcon />
            hot end pencil holder v3
          </RootName>
          <Icon size={13}>
            <circle cx="6.500" cy="6.500" r="5.700" fill="#fff" stroke="#222" />
            <circle cx="6.500" cy="6.500" r="2.200" fill="#222" />
          </Icon>
        </TreeItem>
      </TreeRow>
      {treeRows.map((row) => (
        <TreeRow key={row.name} $indent={row.level === 2 ? 72 : 33}>
          {row.level === 1 && (
            <Twisty aria-label={row.open ? "Collapse" : "Expand"}>
              <TwistyIcon open={row.open} />
            </Twisty>
          )}
          <TreeItem>
            {row.eye && (
              <button aria-label={`Toggle ${row.name}`}>
                <EyeIcon off={row.eye === "off"} />
              </button>
            )}
            <TreeName>
              {row.icon}
              {row.name}
            </TreeName>
          </TreeItem>
        </TreeRow>
      ))}
    </Tree>
  </SidePanel>
);

const Navigation = () => (
  <NavBar aria-label="Navigation">
    <NavButton $gap={5} aria-label="Orbit">
      <Icon>
        <path d="M8 1v14" stroke="#333" strokeWidth="2.500" />
        <path d="M8 2v12" stroke="#fff" />
        <path d="M2 10c-2-3 12-6 13-2 0 2-4 3-8 3" stroke="#333" strokeWidth="1.300" />
        <path d="M5 8v6l-4-3z" fill="#222" />
      </Icon>
      <Caret />
    </NavButton>
    <NavButton $space={6} aria-label="Look at">
      <Icon>
        <path d="M2 6l2-3 1 2 2-3 1 1 5-2v5" fill="#eee" stroke="#444" />
        <path d="M.7 6.500h14.600v9H.7z" fill="#fff" stroke="#444" strokeWidth="1.400" />
        <path d="M4 9h8v3.500H4z" fill="#aab" stroke="#444" />
      </Icon>
    </NavButton>
    <NavButton $space={10} aria-label="Pan">
      <Icon>
        <path
          d="M5 15l-4-6q0-1.500 1.500-1L4 10 2.500 4q1-1.500 2 0L6 8 5.500 2q1-1.500 2 0L8 7l1-5q1.500-1.500 2 0l-.5 6L13 4q1.500-1 2 .5L12.500 11 12 15z"
          fill="#fff"
          stroke="#444"
          strokeWidth=".9"
        />
      </Icon>
    </NavButton>
    <NavButton $space={10} aria-label="Zoom">
      <Icon>
        <path d="M8 9l5 5" stroke="#333" strokeWidth="2.500" />
        <circle cx="5" cy="6.500" r="4" fill="#e2f1f3" stroke="#555" />
        <path d="M13.500 0v5M11 2.500h5M11 7h5" stroke="#333" />
      </Icon>
    </NavButton>
    <NavButton $space={10} $gap={5} aria-label="Fit">
      <Icon>
        <path d="M.5.5h15v15H.5z" stroke="#555" strokeDasharray="2 2" />
        <path d="M11 11l4 4" stroke="#333" strokeWidth="3" />
        <circle cx="7" cy="6.500" r="5.500" fill="#dcf0f2" stroke="#555" />
      </Icon>
      <Caret />
    </NavButton>
    <NavButton $space={6} $gap={3} aria-label="Display settings">
      <Icon>
        <path d="M.5.5h15v11H.5z" fill="#fff" stroke="#444" />
        <path d="M3 3h10v6.500H3z" fill="#a5c3ef" stroke="#3a568c" />
        <path d="M6 12v2M10 12v2M4 14.500h8" stroke="#555" strokeWidth="1.300" />
      </Icon>
      <Caret />
    </NavButton>
    <NavButton $space={6} $gap={2} aria-label="Grid and snaps">
      <Icon>
        <path d="M.5.5h15v15H.5z" fill="#eee" stroke="#555" />
        <path d="M3.500 0v16M6.500 0v16M9.500 0v16M12.500 0v16M0 3.500h16M0 6.500h16M0 9.500h16M0 12.500h16" stroke="#777" strokeWidth=".9" />
      </Icon>
      <Caret />
    </NavButton>
    <NavButton $space={7} $gap={2} aria-label="Viewports">
      <Icon>
        <path d="M1.500 1.500h6v6h-6zM9.500 1.500h6v6h-6zM1.500 9.500h6v5h-6zM9.500 9.500h6v5h-6z" fill="#b5cbe9" stroke="#3b5482" />
        <path d="M3.500 4h2v1h-2zM11.500 4h2v1h-2zM3.500 11.500h2v1h-2zM11.500 11.500h2v1h-2z" stroke="#7d99c4" strokeWidth=".7" />
      </Icon>
      <Caret />
    </NavButton>
  </NavBar>
);

const TimelineBar = () => (
  <Timeline>
    <PlayControls>
      {playButtons.map(([label, d]) => (
        <PlayButton key={label} aria-label={label}>
          <Icon size={18}>
            <path d={d} fill="#444" stroke="#444" strokeWidth="1.200" />
          </Icon>
        </PlayButton>
      ))}
    </PlayControls>
    <Track>
      <Features>
        {features.map((key, i) => (
          <Feature key={i}>
            <button aria-label={featureIcons[key][0]}>{featureIcons[key][1]}</button>
            <Tick />
          </Feature>
        ))}
      </Features>
      <Baseline />
    </Track>
    <Marker width="12" height="32" viewBox="0 0 12 32" aria-hidden="true">
      <path d="M0 0h12v4L7 10v22H5V10L0 4z" fill="#666" />
    </Marker>
    <SettingsButton aria-label="Timeline settings">
      <Gear color="#777" />
    </SettingsButton>
  </Timeline>
);

const App = () => (
  <Page>
    <GlobalStyle />
    <Header />
    <Toolbar />
    <Workspace>
      <Model />
      <ViewCube />
      <Browser />
      <BottomRow>
        <SidePanel>
          <PanelHeader>
            <PanelTitle $indent>COMMENTS</PanelTitle>
            <button aria-label="Show comments">
              <CircleSign plus />
            </button>
            <PanelGrip />
          </PanelHeader>
        </SidePanel>
        <Navigation />
      </BottomRow>
    </Workspace>
    <TimelineBar />
  </Page>
);

export default App;
